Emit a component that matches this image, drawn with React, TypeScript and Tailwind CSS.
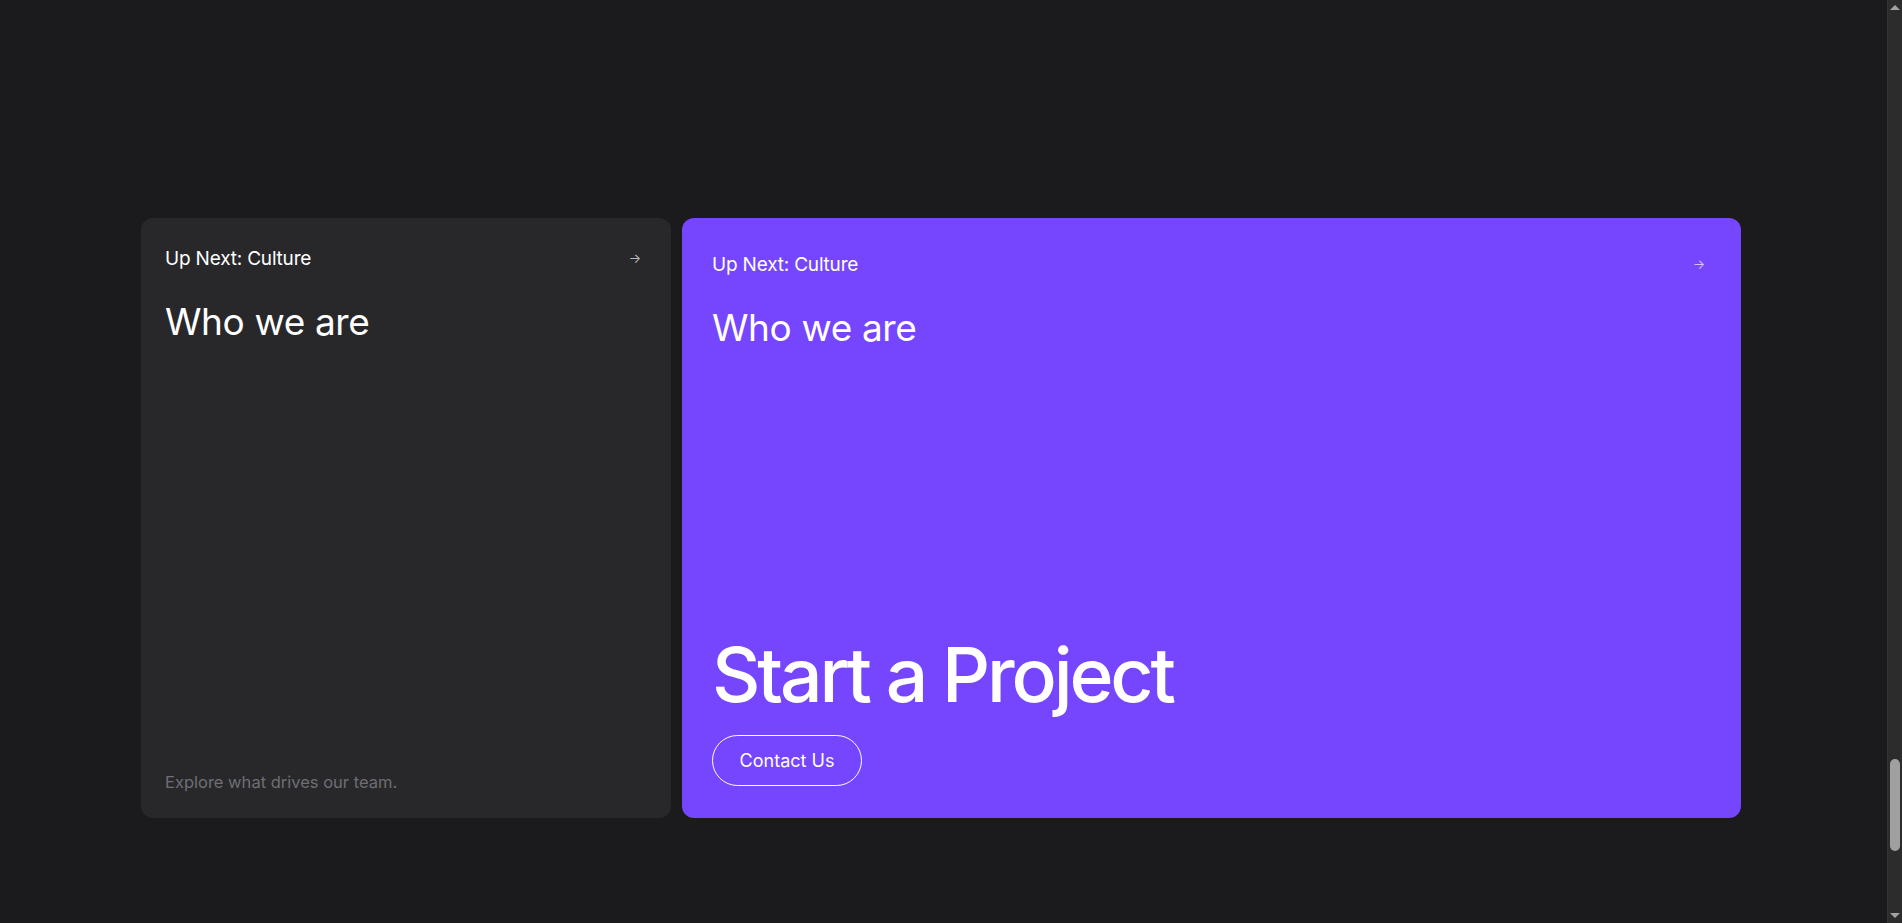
import React from "react";

type NextCardProps = {
  label: string;
  title: string;
  className?: string;
  children?: React.ReactNode;
};

const NextCard = ({ label, title, className, children }: NextCardProps) => {
  return (
    <div className={`flex flex-col rounded-xl ${className ?? ""}`}>
      <div className="mt-[3px] flex items-center justify-between">
        <span className="text-[19px] leading-7 tracking-[-0.01em] text-white">
          {label}
        </span>
        <span className="flex h-6 w-6 items-center justify-center text-[13px] text-white/70">
          →
        </span>
      </div>
      <h2 className="mt-[27px] text-[37px] leading-[44px] font-normal tracking-[-0.01em] text-white">
        {title}
      </h2>
      <div className="flex-1" />
      {children}
    </div>
  );
};

const FakeScrollbar = () => {
  return (
    <div className="flex h-full w-[15px] flex-col items-center bg-[#2c2c2c] border-l border-[#333]">
      <div className="mt-[5px] h-0 w-0 border-x-[5px] border-b-[5px] border-x-transparent border-b-[#a3a3a3]" />
      <div className="flex-1" />
      <div className="mb-[62px] h-[92px] w-[10px] rounded-full bg-[#a0a0a0]" />
      <div className="mb-[5px] h-0 w-0 border-x-[5px] border-t-[5px] border-x-transparent border-t-[#a3a3a3]" />
    </div>
  );
};

export default function App() {
  return (
    <div
      className="flex h-[923px] w-full overflow-hidden bg-[#1b1b1d]"
      style={{ fontFamily: "Inter, 'Noto Sans', sans-serif" }}
    >
      <main className="flex-1 pt-[218px] pl-[141px]">
        <div className="flex h-[600px] w-[1600px] gap-[11px]">
          <NextCard
            label="Up Next: Culture"
            title="Who we are"
            className="w-[530px] shrink-0 bg-[#28282b] p-6"
          >
            <p className="text-[16.5px] leading-6 text-[#6e6e74]">
              Explore what drives our team.
            </p>
          </NextCard>
          <NextCard
            label="Up Next: Culture"
            title="Who we are"
            className="flex-1 bg-[#7645fe] p-[30px] pb-[32px]"
          >
            <h1 className="text-[75px] leading-[80px] font-medium tracking-[-0.042em] text-white">
              Start a Project
            </h1>
            <button
              type="button"
              className="mt-[20px] flex h-[51px] w-[150px] items-center justify-center rounded-full border border-white text-[18px] text-white"
            >
              Contact Us
            </button>
          </NextCard>
        </div>
      </main>
      <FakeScrollbar />
    </div>
  );
}
